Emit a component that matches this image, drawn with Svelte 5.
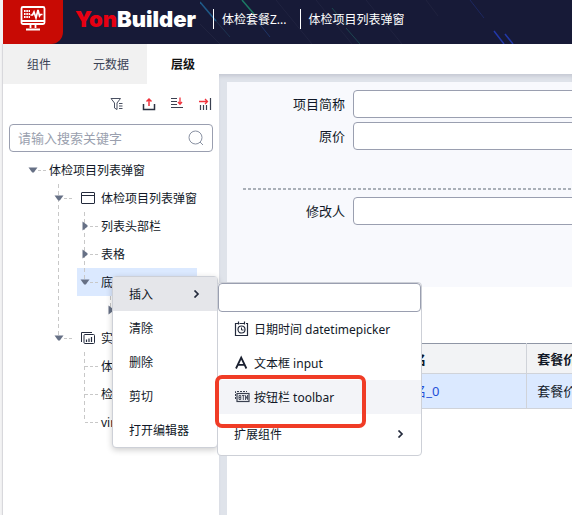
<script>
  const tabs = ['组件', '元数据', '层级'];
  let activeTab = $state('层级');
  let keyword = $state('');
  let filter = $state('');

  // guides: one entry per indent level; the last one belongs to the node itself
  const nodes = [
    { guides: ['none'], arrow: 'down', label: '体检项目列表弹窗' },
    { guides: ['none', 'full'], arrow: 'down', icon: 'window', label: '体检项目列表弹窗' },
    { guides: ['none', 'full', 'full'], arrow: 'right', label: '列表头部栏' },
    { guides: ['none', 'full', 'full'], arrow: 'right', label: '表格' },
    { guides: ['none', 'full', 'half'], arrow: 'down', label: '底', selected: true },
    { guides: ['none', 'full', 'none', 'half'], arrow: 'right', label: '' },
    { guides: ['none', 'half'], arrow: 'down', icon: 'entity', label: '实' },
    { guides: ['none', 'none', 'full'], label: '体' },
    { guides: ['none', 'none', 'full'], label: '检' },
    { guides: ['none', 'none', 'half'], label: 'vir' }
  ];

  const actions = ['清除', '删除', '剪切', '打开编辑器'];
</script>

<div class="page">
  <header>
    <div class="product">
      <svg width="26" height="26" viewBox="0 0 26 26" fill="none" stroke="#fff" stroke-width="1.8">
        <rect x="1.5" y="2" width="23" height="17" rx="1.5" />
        <path d="M2 16h22M10.500 19v4M15.500 19v4" />
        <path d="M6 24.500h14" stroke-width="2" />
        <path d="M4 6h6M4 9h6M4 12h6" stroke-width="2" stroke-dasharray="1.6 0.7" />
        <path d="M10.500 10h2l1.500-3 2 6 2-8 1.500 6 1-1.500h2" stroke-width="1.7" />
      </svg>
    </div>
    <div class="brand"><span>Yon</span>Builder</div>
    <nav>
      <a href="#app">体检套餐Z...</a>
      <a href="#page">体检项目列表弹窗</a>
    </nav>
    <svg class="streaks" width="360" height="44" viewBox="0 0 360 44" fill="none" aria-hidden="true">
      <path d="M0 2l16 19" stroke="#1f5a88" stroke-width="1.5" />
      <path d="M16 21l14 16" stroke="#1d3350" />
      <path d="M42 0l12 14" stroke="#1c7a64" stroke-width="1.5" />
      <path d="M54 17l16 20" stroke="#203566" />
      <path d="M132 8l14 17" stroke="#174a50" />
      <path d="M146 28l14 16" stroke="#1d4650" />
      <path d="M0 24l20 20M76 0l36 44M116 0l36 44M166 0l36 44M226 0l12 16" stroke="#20233f" />
      <path d="M270 0l14 18" stroke="#1d2860" />
      <path d="M294 31l10 13M305 34l8 10" stroke="#2238a8" stroke-width="1.5" />
    </svg>
  </header>

  <div class="body">
    <aside>
      <div class="tabs" role="tablist">
        {#each tabs as tab}
          <button role="tab" aria-selected={tab === activeTab} class:active={tab === activeTab} onclick={() => (activeTab = tab)}>{tab}</button>
        {/each}
      </div>

      <div class="tools">
        <button class="filter" aria-label="筛选">
          <svg width="14" height="14" viewBox="0 0 14 14" fill="none" stroke="#4a5162"><path d="M1 1.500h9.500L7 6v6.500L4.500 11V6zM9 6.500h3.500M9 9h3.500M9 11.500h3.500" /></svg>
        </button>
        <button aria-label="导出">
          <svg width="14" height="14" viewBox="0 0 14 14" fill="none"><path d="M1.500 7v5.500h11V7" stroke="#2a3040" stroke-width="1.500" /><path d="M7 9V2M4.500 4.500L7 2l2.500 2.500" stroke="#f0323c" stroke-width="1.500" /></svg>
        </button>
        <button aria-label="全部收起">
          <svg width="14" height="14" viewBox="0 0 14 14" fill="none"><path d="M1 1.500h6M1 4.500h6M1 7.500h6M1 10.500h12" stroke="#3a4050" stroke-width="1.200" /><path d="M10 0.500V7M8 5l2 2.200L12 5" stroke="#f0323c" stroke-width="1.300" /></svg>
        </button>
        <button aria-label="展开面板">
          <svg width="14" height="14" viewBox="0 0 14 14" fill="none"><path d="M2.500 8v5M5.500 8v5M8.500 8v5M12.500 1v12" stroke="#3a4050" stroke-width="1.200" /><path d="M1 4.500h8M7 2l2.500 2.500L7 7" stroke="#f0323c" stroke-width="1.300" /></svg>
        </button>
      </div>

      <label class="search">
        <input type="text" placeholder="请输入搜索关键字" aria-label="请输入搜索关键字" bind:value={keyword} />
        <svg width="16" height="16" viewBox="0 0 16 16" fill="none" stroke="#8a92a3"><circle cx="7.500" cy="7.500" r="6.500" /><path d="M12 12l3 3" /></svg>
      </label>

      <div class="tree" role="tree">
        {#each nodes as node}
          <div class="node" role="treeitem" aria-selected={!!node.selected} tabindex="-1">
            {#each node.guides.slice(0, -1) as guide}
              <span class="guide {guide}"></span>
            {/each}
            <span class="row" class:selected={node.selected}>
              <span class="guide own {node.guides.at(-1)}" class:branch={!node.arrow}>
                {#if node.arrow}
                  <svg width="10" height="10" viewBox="0 0 10 10" fill="#667085">
                    <path d={node.arrow === 'down' ? 'M0.500 2.500h9L5.800 7.500H4.200z' : 'M2.500 0.500v9L7.500 5.800V4.200z'} />
                  </svg>
                {/if}
              </span>
              {#if node.icon === 'window'}
                <svg class="kind" width="14" height="14" viewBox="0 0 14 14" fill="none" stroke="#232a3c"><rect x="0.500" y="1.500" width="13" height="11" rx="0.500" /><path d="M1 4.500h12" /></svg>
              {:else if node.icon === 'entity'}
                <svg class="kind" width="14" height="14" viewBox="0 0 14 14" fill="none" stroke="#232a3c"><path d="M0.500 11V1.500h10.500" /><rect x="3" y="3.500" width="10.500" height="9" rx="1" /><path d="M5.500 8.500V11M8 7.500V11M10.500 6V11" stroke-width="1.200" /></svg>
              {/if}
              <span class="text">{node.label}</span>
            </span>
          </div>
        {/each}
      </div>
    </aside>

    <main>
      <div class="canvas">
        <form>
          <div class="field"><label for="short">项目简称</label><input id="short" type="text" /></div>
          <div class="field"><label for="price">原价</label><input id="price" type="text" /></div>
          <div class="rule"></div>
          <div class="field"><label for="editor">修改人</label><input id="editor" type="text" /></div>
        </form>
        <table>
          <thead><tr><th></th><th>套餐名</th><th>套餐价</th></tr></thead>
          <tbody><tr><td></td><td><a href="#row">套餐名_0</a></td><td>套餐价</td></tr></tbody>
        </table>
      </div>
    </main>
  </div>

  <div class="menu context" role="menu">
    <button class="open" role="menuitem"><span>插入</span>
      <svg width="8" height="8" viewBox="0 0 8 8" fill="none" stroke="#232a3c" stroke-width="1.700"><path d="M1.500 0.500L5 4 1.500 7.500" /></svg>
    </button>
    {#each actions as action}
      <button role="menuitem"><span>{action}</span></button>
    {/each}
  </div>

  <div class="menu insert" role="menu">
    <input type="text" aria-label="搜索组件" bind:value={filter} />
    <button role="menuitem">
      <svg width="16" height="16" viewBox="0 0 16 16" fill="none" stroke="#232a3c"><path d="M4 2.500H1.500v12h12v-12H12M5.500 2.500h4.500M4.500 0.500v3M10.500 0.500v3" stroke-width="1.200" /><circle cx="7.500" cy="8.500" r="3.500" stroke-width="1.200" /><path d="M7.500 6.500V9h2" /></svg>
      <span>日期时间 datetimepicker</span>
    </button>
    <button role="menuitem">
      <svg width="16" height="16" viewBox="0 0 16 16" fill="none" stroke="#1a2030" stroke-width="1.800"><path d="M2 13.500L7.200 2.500l5.200 11M4 9.800h6.400" /></svg>
      <span>文本框 input</span>
    </button>
    <button class="hover" role="menuitem">
      <svg width="16" height="16" viewBox="0 0 16 16" fill="none" stroke="#3a4050"><path d="M1.500 10V2.500H13" stroke-dasharray="2 1" /><rect x="3" y="4.500" width="12" height="8" stroke-width="1.200" /><path d="M5 6.500v4h1.800v-4zM5 8.500h1.800M8 6.500h2.500M9.300 6.500V11M11.500 11V6.500l2 4V6" stroke-width="0.900" /></svg>
      <span>按钮栏 toolbar</span>
    </button>
    <button class="more" role="menuitem"><span>扩展组件</span>
      <svg width="8" height="8" viewBox="0 0 8 8" fill="none" stroke="#232a3c" stroke-width="1.700"><path d="M1.500 0.500L5 4 1.500 7.500" /></svg>
    </button>
  </div>

  <div class="marker"></div>
</div>

<style>
  :global(body) { background: #f3f3f4; }
  * { box-sizing: border-box; }
  .page {
    position: relative;
    display: flex;
    flex-direction: column;
    min-height: 100vh;
    padding-left: 3px;
    overflow: hidden;
    color: #111827;
    font: 12px/20px "Noto Sans", "Noto Sans CJK SC", sans-serif;
  }
  button, input { font: inherit; color: inherit; margin: 0; }
  button { padding: 0; border: 0; background: none; text-align: left; }
  input { min-width: 0; background: #fff; border: 1px solid #9a9fb0; border-radius: 4px; }
  svg { display: block; flex: none; }

  header {
    position: relative;
    display: flex;
    align-items: flex-start;
    height: 44px;
    background: #171a37;
    overflow: hidden;
  }
  .product {
    display: flex;
    justify-content: center;
    width: 60px;
    height: 44px;
    padding-top: 5px;
    background: #c80a04;
    border-bottom-right-radius: 12px;
  }
  .brand {
    width: 138px;
    margin-left: 12px;
    color: #fff;
    font: 900 22px/38px Inter, sans-serif;
  }
  .brand span { color: #e60012; }
  nav { display: flex; gap: 13px; padding-top: 9px; }
  nav a { padding: 1px 0 0 8px; height: 20px; border-left: 1px solid #fff; color: #fff; text-decoration: none; z-index: 1; white-space: nowrap; }
  .streaks { position: absolute; left: 197px; top: 0; }

  .body { display: flex; flex: 1; background: #fff; }
  aside { flex: none; width: 216px; box-shadow: -1px 0 1px #d8d8dc; }
  .tabs { display: flex; height: 40px; }
  .tabs button { flex: 1; padding-top: 2px; background: #f1f1f1; color: #3a4255; text-align: center; }
  .tabs button.active { background: #fff; color: #111; font-weight: 700; }
  .tools { display: flex; justify-content: flex-end; gap: 14px; padding: 13px 7px 13px 0; }
  .tools .filter { margin-right: 4px; }
  .search { display: flex; position: relative; align-items: center; margin: 0 6px 4px; }
  .search input { width: 100%; height: 28px; padding: 0 32px 0 8px; font-size: 13px; }
  .search input::placeholder { color: #9a9fae; }
  .search svg { position: absolute; right: 9px; }

  .tree { padding-left: 17px; }
  .node { display: flex; height: 28px; white-space: nowrap; }
  .row { display: flex; align-items: center; gap: 3px; }
  .row.selected { flex: 1; margin-left: 5px; margin-right: 22px; background: #dbe9ff; }
  .row.selected .own { margin-left: -5px; }
  .text { padding-top: 2px; }
  .guide { flex: none; width: 26px; height: 28px; }
  .full, .half {
    background: repeating-linear-gradient(#c8c8c8 0 4px, transparent 4px 7px) 12px 0 / 1px 28px no-repeat;
  }
  .half { background-size: 1px 14px; }
  .own { display: flex; position: relative; align-items: center; justify-content: center; }
  .own::after {
    content: "";
    position: absolute;
    left: 18px;
    top: 14px;
    width: 8px;
    border-top: 1px dashed #c8c8c8;
  }
  .branch::after { left: 13px; width: 13px; }
  .kind { margin: 0 3px 0 6px; }

  main {
    flex: 1;
    min-width: 0;
    margin-top: 30px;
    padding: 8px 0 0 8px;
    background: #dfe3ea;
    box-shadow: inset 0 4px 4px -2px #c2c6d0;
  }
  .canvas { height: 100%; background: #fff; overflow: hidden; }
  form { padding: 8px 0 58px; min-width: 380px; background: #f8f9fd; }
  .field { display: flex; align-items: center; gap: 8px; margin-bottom: 4px; font-size: 13px; }
  .field label { width: 118px; text-align: right; }
  .field input { flex: 1; height: 28px; }
  .rule {
    height: 2px;
    margin: 38px 0 7px 16px;
    background: repeating-linear-gradient(90deg, #aab0b8 0 3px, transparent 3px 5px);
  }
  form + table { margin-top: 56px; }
  table { width: 450px; table-layout: fixed; border-collapse: collapse; border-top: 1px solid #8f96a5; font-size: 13px; text-align: left; }
  th, td { padding: 0 10px; border-bottom: 1px solid #d0d3d9; border-right: 1px solid #d0d3d9; white-space: nowrap; }
  th { height: 30px; background: #f2f3f5; }
  td { height: 35px; background: #dbe9ff; }
  td a { color: #1f4fd8; text-decoration: none; }

  .menu {
    position: absolute;
    display: flex;
    flex-direction: column;
    background: #fff;
    border: 1px solid #cdd0d7;
    border-radius: 4px;
  }
  .menu button { display: flex; align-items: center; height: 34px; padding: 0 16px; gap: 4px; white-space: nowrap; }
  .menu button span { padding-top: 2px; }
  .menu .open, .menu .more { justify-content: space-between; }
  .context { left: 112px; top: 276px; width: 106px; box-shadow: 0 2px 6px #0003; }
  .context .open { background: #e5e6ea; }
  .insert { left: 217px; top: 282px; width: 205px; padding-bottom: 4px; }
  .insert input { height: 29px; }
  .insert .hover { background: #f3f4f8; }
  .insert .more { margin-top: 3px; }
  .marker {
    position: absolute;
    left: 215px;
    top: 375px;
    width: 151px;
    height: 53px;
    border: 4px solid #f03c26;
    border-radius: 7px;
    pointer-events: none;
  }
</style>
